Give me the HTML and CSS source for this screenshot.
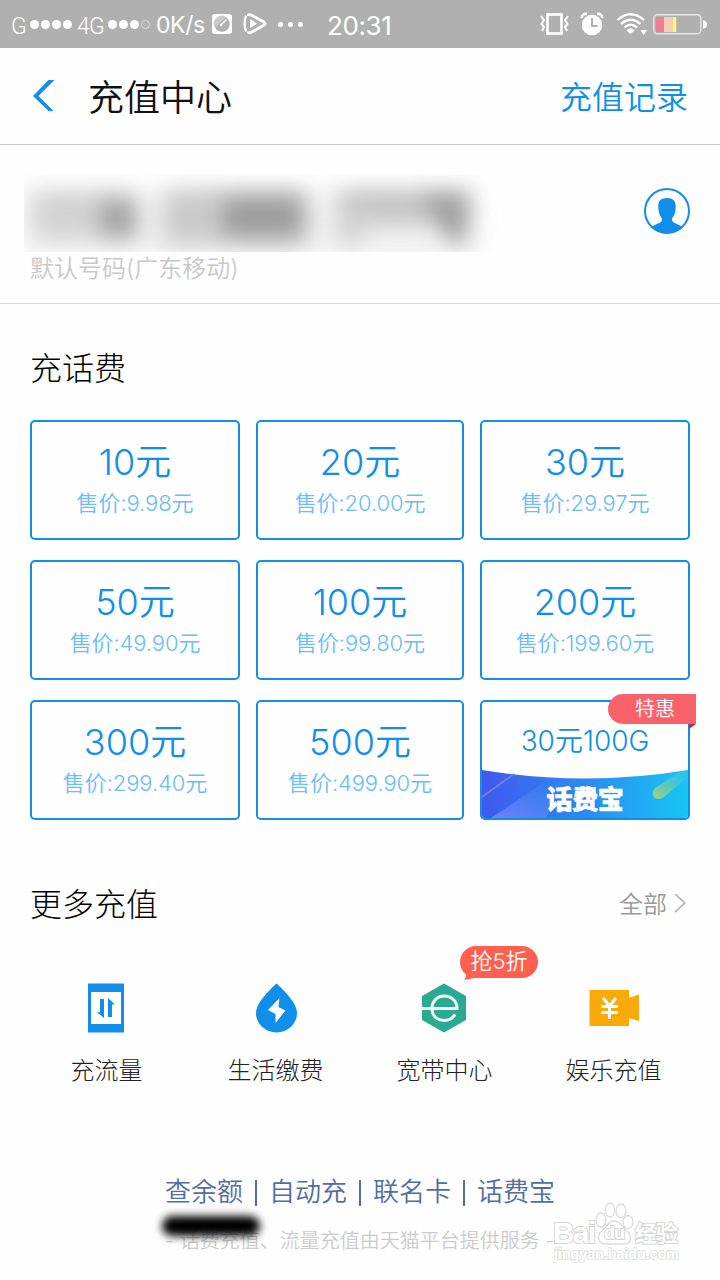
FILE: index.html
```html
<!DOCTYPE html>
<html lang="zh-CN">
<head>
<meta charset="utf-8">
<title>充值中心</title>
<link rel="stylesheet" href="styles.css">
</head>
<body>
<div class="screen">
  <div class="status">
    <span class="carrier carrier-g">G</span>
    <span class="signal"><i></i><i></i><i></i><i></i></span>
    <span class="carrier carrier-4g">4G</span>
    <span class="signal"><i></i><i></i><i></i><i class="off"></i></span>
    <span class="speed">0K/s</span>
    <svg class="ic-gauge" width="20" height="20" viewBox="0 0 20 20"><rect width="20" height="20" rx="3" fill="#fff"/><circle cx="10" cy="10" r="7.8" fill="#b0b0b0"/><path d="M3 14A8 8 0 0 1 14 3Z" fill="#cacaca"/><path d="M8.5 11.5L14.5 5.5" stroke="#fff" stroke-width="1.3"/><circle cx="9" cy="11" r="1.2" fill="#fff"/></svg>
    <svg class="ic-play" width="24" height="22" viewBox="0 0 24 22"><path d="M3 2.5Q.2 11 3 18.5" fill="none" stroke="#fff" stroke-width="2.2"/><path d="M5 3Q5.500 .8 8 2L21 9Q23 10.500 21 12L8 19.500Q5.500 20.500 5 18.500" fill="none" stroke="#fff" stroke-width="2.8"/><path d="M7 6L14 10.500L7 15Z" fill="#fff"/></svg>
    <span class="more"><i></i><i></i><i></i></span>
    <span class="time">20:31</span>
    <div class="status-right">
      <svg width="29" height="24" viewBox="0 0 29 24"><rect x="7.500" y="2.500" width="14" height="19" fill="none" stroke="#fff" stroke-width="2.600"/><path d="M1 4L4 8L1.500 12L4 15L2 19M28 4L25 8L27.500 12L25 15L27 19" fill="none" stroke="#fff" stroke-width="2"/></svg>
      <svg class="ic-alarm" width="24" height="24" viewBox="0 0 24 24"><circle cx="12" cy="13" r="10.300" fill="#fff"/><path d="M1.500 6Q2.500 1.500 7 1.800M17 1.800Q21.500 1.500 22.500 6" fill="none" stroke="#fff" stroke-width="2.500"/><path d="M12 6V14H17.500" fill="none" stroke="#b0b0b0" stroke-width="2"/></svg>
      <svg class="ic-wifi" width="31" height="24" viewBox="0 0 31 24"><path d="M1.500 8Q14.500 -3.500 28 8M5 12Q14.500 3.500 24.500 12M8.500 15.500Q14.500 10 21 15.500" fill="none" stroke="#fff" stroke-width="2.300"/><path d="M10.500 18.500Q14.500 14 18.500 18.500L14.500 22Z" fill="#fff"/><path d="M24.500 18H31L27.700 23Z" fill="#fff"/></svg>
      <svg class="ic-battery" width="55" height="22" viewBox="0 0 55 22"><rect x=".8" y="1.800" width="47" height="19" rx="3.500" fill="none" stroke="#e6e6e6" stroke-width="1.400"/><path d="M3 4H11V19H3Z" fill="#eb8190"/><path d="M11 4H19.500V19H11Z" fill="#f9ccb5"/><path d="M19.500 4H23.300V19H19.500Z" fill="#fbf67d"/><path d="M50 7Q54 8 54 11.500Q54 15 50 16Z" fill="#fff"/></svg>
    </div>
  </div>

  <header class="header">
    <svg class="back" width="24" height="32" viewBox="0 0 24 32"><path d="M16.500 0H22.500L6.500 16L21.500 31H16.500L1 16Z" fill="#108ee9"/></svg>
    <h1 class="title">充值中心</h1>
    <span class="history">充值记录</span>
  </header>

  <section class="account">
    <div class="account-main">
      <svg class="hidden-number" width="476" height="78" viewBox="0 0 476 78">
        <defs><filter id="soft" x="-20%" y="-60%" width="140%" height="220%"><feGaussianBlur stdDeviation="11"/></filter></defs>
        <rect x="-2" y="18" width="456" height="62" fill="#e4e4e4" opacity=".55" filter="url(#soft)"/>
        <g filter="url(#soft)">
          <rect x="10" y="18" width="100" height="46" fill="#d2d2d2"/><rect x="76" y="26" width="36" height="38" fill="#a2a2a2"/>
          <rect x="140" y="16" width="142" height="54" fill="#cacaca"/><rect x="198" y="22" width="82" height="42" fill="#9d9d9d"/>
          <rect x="314" y="16" width="132" height="34" fill="#c4c4c4"/><rect x="314" y="36" width="26" height="34" fill="#d2d2d2"/><path d="M396 20H442V68H426Z" fill="#9c9c9c"/>
        </g>
      </svg>
      <p class="operator">默认号码(广东移动)</p>
    </div>
    <svg class="contact" width="46" height="46" viewBox="0 0 46 46"><defs><clipPath id="disc"><circle cx="23" cy="23" r="22"/></clipPath></defs><circle cx="23" cy="23" r="22" fill="#fff" stroke="#108ee9" stroke-width="2"/><path clip-path="url(#disc)" d="M23 10C16.500 10 14 13.500 14.300 19C14.500 25 16 28 18 30.500Q18.500 34 14 35.500L7 39V46H39V39L32 35.500Q27.500 34 28 30.500C30 28 31.500 25 31.700 19C32 13.500 29.500 10 23 10Z" fill="#108ee9"/></svg>
  </section>

  <section class="topup">
    <h2 class="heading">充话费</h2>
    <div class="grid">
      <div class="card"><b class="amount">10元</b><span class="price">售价:9.98元</span></div>
      <div class="card"><b class="amount">20元</b><span class="price">售价:20.00元</span></div>
      <div class="card"><b class="amount">30元</b><span class="price">售价:29.97元</span></div>
      <div class="card"><b class="amount">50元</b><span class="price">售价:49.90元</span></div>
      <div class="card"><b class="amount">100元</b><span class="price">售价:99.80元</span></div>
      <div class="card"><b class="amount">200元</b><span class="price">售价:199.60元</span></div>
      <div class="card"><b class="amount">300元</b><span class="price">售价:299.40元</span></div>
      <div class="card"><b class="amount">500元</b><span class="price">售价:499.90元</span></div>
      <div class="card promo">
        <b class="promo-amount">30元100G</b>
        <div class="promo-banner">
          <svg class="promo-art" width="206" height="49" viewBox="0 0 206 49"><defs><linearGradient id="sea"><stop offset="0" stop-color="#4058ee"/><stop offset=".5" stop-color="#2b8af0"/><stop offset="1" stop-color="#17c6f4"/></linearGradient><linearGradient id="comet" x1="0" y1="1" x2="1" y2="0"><stop offset="0" stop-color="#a8d66d"/><stop offset="1" stop-color="#3dc7e7" stop-opacity=".3"/></linearGradient><linearGradient id="ray" x1="0" y1="1" x2="1" y2="0"><stop offset="0" stop-color="#7b8dfa" stop-opacity=".8"/><stop offset="1" stop-color="#5695fa" stop-opacity="0"/></linearGradient></defs><path d="M0 1Q103 18 206 1V49H0Z" fill="url(#sea)"/><path d="M9 49L61 14H82L64 49Z" fill="url(#ray)"/><path d="M0 28L32 5" stroke="#7080e2" stroke-width="2"/><path d="M173 19L198 3L206 2V8L182 28C174 34 167 26 173 19Z" fill="url(#comet)"/></svg>
          <span class="promo-name">话费宝</span>
        </div>
        <span class="ribbon">特惠</span>
      </div>
    </div>
  </section>

  <section class="services">
    <div class="services-head">
      <h2 class="heading">更多充值</h2>
      <span class="all">全部<svg width="14" height="22" viewBox="0 0 14 22"><path d="M2 0L12 9L2 18" fill="none" stroke="#bbb" stroke-width="1.800"/></svg></span>
    </div>
    <div class="service-list">
      <div class="service">
        <svg width="50" height="50" viewBox="0 0 50 50"><path d="M6 .5H42V49.500H6Z" fill="#108ee9"/><path d="M9 9H39V41H9Z" fill="#fff"/><path d="M22 16V35L15 29.300H18V16ZM26 34V15L33 21.500H30V34Z" fill="#108ee9"/></svg>
        <span class="service-name">充流量</span>
      </div>
      <div class="service">
        <svg width="50" height="50" viewBox="0 0 50 50"><path d="M25.500 .5C19.500 6 5 19.500 5 30A20.500 19.500 0 0 0 46 30C46 19.500 31.500 6 25.500 .5Z" fill="#108ee9"/><path d="M28.500 15L17 27L24.500 31V40L34.500 27.500L27.500 24Z" fill="#fff"/></svg>
        <span class="service-name">生活缴费</span>
      </div>
      <div class="service">
        <svg width="50" height="50" viewBox="0 0 50 50"><path d="M24 .5L46 13V37L24 49.500L2 37V13Z" fill="#2aaa91"/><path d="M2 25.500H37C37 18 31.500 13 24.500 13C17 13 12 18.500 12 25.500C12 33 17 37.500 24.500 37.500C29 37.500 32.500 35.500 35 31.500" fill="none" stroke="#fff" stroke-width="2.900"/></svg>
        <span class="service-name">宽带中心</span>
        <span class="bubble">抢5折<svg class="bubble-tail" width="16" height="9" viewBox="0 0 16 9"><path d="M1 0Q4 4 0 9L16 6V0Z" fill="#ff6050"/></svg></span>
      </div>
      <div class="service">
        <svg width="50" height="50" viewBox="0 0 50 50"><path d="M.5 7H40V15L50 11.500V38L40 35V43H.5Z" fill="#f9a908"/><path d="M14 15L20.500 23L27 15M20.500 22V36M12.500 23.500H29M12.500 29.500H29" fill="none" stroke="#fff" stroke-width="3"/></svg>
        <span class="service-name">娱乐充值</span>
      </div>
    </div>
  </section>

  <footer class="footer">
    <nav class="links"><span>查余额</span><i></i><span>自动充</span><i></i><span>联名卡</span><i></i><span>话费宝</span></nav>
    <p class="notice">- 话费充值、流量充值由天猫平台提供服务 -</p>
    <div class="smear"></div>
    <svg class="watermark" width="132" height="66" viewBox="0 0 132 66">
      <g fill="#fff" stroke="#dcdcdc" stroke-width="1.300"><ellipse cx="49" cy="19" rx="5" ry="7"/><ellipse cx="58" cy="9" rx="4.800" ry="7"/><ellipse cx="69" cy="10" rx="5" ry="7"/><ellipse cx="76" cy="21" rx="5" ry="6.500"/><path d="M62 20C56 20 55 26 50 30C44 34 46 43 54 43H72C80 43 80 35 75 30C70 26 69 20 62 20Z"/></g>
      <g class="wm-text"><text x="1" y="42" font-size="30" textLength="43">Bai</text><text class="wm-thin" x="52" y="38" font-size="18" textLength="21">du</text><text class="wm-cjk" x="83" y="40" font-size="22" textLength="43">经验</text></g>
      <text class="wm-url" x="2" y="58" font-size="14" textLength="125" lengthAdjust="spacingAndGlyphs">jingyan.baidu.com</text>
    </svg>
  </footer>
</div>
</body>
</html>
```
FILE: styles.css
```css
* { box-sizing: border-box; }
body { margin: 0; background: #fff; font-family: Inter, "Noto Sans CJK SC", sans-serif; font-weight: 300; }
h1, h2, p { margin: 0; font-weight: 300; }
.screen { width: 720px; height: 1280px; overflow: hidden; background: #fefefe; display: flex; flex-direction: column; }

.status { height: 48px; flex: none; background: #b0b0b0; color: #fff; display: flex; align-items: center; padding: 0 12px 0 11px; font-family: Roboto, Inter, sans-serif; }
.status svg { flex: none; display: block; }
.carrier { font-size: 23px; line-height: 28px; padding-top: 6px; font-weight: 350; }
.carrier-g { width: 19px; }
.carrier-4g { width: 31px; margin-left: 5px; white-space: nowrap; letter-spacing: -.8px; }
.signal { display: flex; gap: 2px; }
.signal i { width: 9px; height: 9px; border-radius: 50%; background: #fff; }
.signal .off { background: none; border: 1px solid #ddd; }
.speed { font-family: Inter, sans-serif; font-size: 23px; width: 50px; margin-left: 6px; line-height: 28px; padding-top: 2px; font-weight: 400; white-space: nowrap; letter-spacing: -.4px; }
.ic-gauge { margin-left: 6px; }
.ic-play { margin-left: 11px; }
.more { display: flex; gap: 5px; margin-left: 11px; }
.more i { width: 5px; height: 5px; border-radius: 50%; background: #fff; }
.time { font-family: Inter, sans-serif; font-size: 26px; margin-left: 24px; padding-top: 4px; font-weight: 400; line-height: 30px; letter-spacing: -.4px; }
.status-right { margin-left: auto; display: flex; align-items: center; }
.ic-alarm { margin-left: 11px; }
.ic-wifi { margin-left: 12px; }
.ic-battery { margin-left: 6px; }

.header { height: 97px; flex: none; border-bottom: 1px solid #c8c8c8; display: flex; align-items: center; padding: 0 32px; }
.back { flex: none; }
.title { font-size: 36px; line-height: 48px; color: #111; margin-left: 32px; padding-top: 3px; font-weight: 350; }
.history { margin-left: auto; font-size: 32px; line-height: 48px; color: #108ee9; padding-top: 3px; font-weight: 350; }

.account { height: 159px; flex: none; border-bottom: 1px solid #dcdcdc; display: flex; justify-content: space-between; align-items: flex-start; padding: 29px 30px 0 24px; }
.hidden-number { display: block; }
.operator { color: #c8c8c8; font-size: 24px; line-height: 32px; padding: 1px 0 0 6px; font-weight: 350; }
.contact { margin-top: 14px; flex: none; }

.topup { padding: 41px 30px 0; flex: none; }
.heading { color: #000; font-size: 32px; line-height: 48px; }
.grid { display: grid; grid-template-columns: 210px 208px 210px; gap: 20px 16px; grid-auto-rows: 120px; margin-top: 27px; }
.card { border: 2px solid #108ee9; border-radius: 5px; display: flex; flex-direction: column; align-items: center; padding-top: 18px; position: relative; }
.amount { color: #108ee9; font-size: 36px; line-height: 44px; font-weight: 350; }
.price { color: #6bbcfa; font-size: 22px; line-height: 32px; margin-top: 3px; font-weight: 350; letter-spacing: -.1px; }
.promo { padding-top: 21px; }
.promo-amount { color: #108ee9; font-size: 28px; line-height: 36px; font-weight: 350; }
.promo-banner { margin-top: auto; width: 206px; height: 49px; position: relative; display: flex; justify-content: center; overflow: hidden; border-radius: 0 0 3px 3px; }
.promo-art { position: absolute; inset: 0; }
.promo-name { position: relative; color: #fff; font-size: 26px; line-height: 28px; font-weight: 900; padding-top: 17px; -webkit-text-stroke: .6px #fff; letter-spacing: -.4px; }
.ribbon { position: absolute; right: -8px; top: -8px; width: 88px; height: 30px; border-radius: 15px 0 0 15px; background: #fa626b; color: #fff; font-size: 20px; line-height: 30px; padding-left: 27px; font-weight: 350; }
.ribbon::after { content: ""; position: absolute; right: 0; top: 30px; border-top: 5px solid #d7202f; border-right: 7px solid transparent; }

.services { padding: 61px 22px 0; flex: none; }
.services-head { display: flex; justify-content: space-between; align-items: center; padding: 0 11px 0 8px; }
.all { display: flex; align-items: center; gap: 6px; color: #999; font-size: 24px; line-height: 32px; font-weight: 350; }
.service-list { display: grid; grid-template-columns: repeat(4, 169px); margin-top: 54px; }
.service { display: flex; flex-direction: column; align-items: center; position: relative; }
.service-name { color: #222; font-size: 24px; line-height: 32px; margin-top: 22px; }
.bubble { position: absolute; left: 100px; top: -37px; width: 78px; height: 32px; border-radius: 16px; background: #ff6050; color: #fff; font-size: 22px; line-height: 31px; text-align: center; font-weight: 350; }
.bubble-tail { position: absolute; left: 4px; bottom: -2px; }

.footer { position: relative; padding: 87px 0 0 165px; flex: none; }
.links { display: flex; align-items: center; color: #526d9e; font-size: 26px; line-height: 36px; font-weight: 350; }
.links i { width: 2px; height: 26px; background: #526d9e; margin: 2px 12px 0; }
.links span { white-space: nowrap; }
.notice { color: #ccc; font-size: 20px; line-height: 28px; margin-top: 17px; white-space: nowrap; font-weight: 350; }
.smear { position: absolute; left: 162px; top: 129px; width: 98px; height: 20px; border-radius: 10px; background: #000; filter: blur(4px); }
.watermark { position: absolute; left: 552px; top: 114px; }
.wm-text { fill: #fff; stroke: #d5d5d5; stroke-width: 2px; paint-order: stroke; font-family: "Liberation Sans", sans-serif; font-weight: 700; }
.wm-cjk { font-family: "Noto Sans CJK SC", sans-serif; }
.wm-url { fill: #fff; stroke: #dedede; stroke-width: 1.500px; paint-order: stroke; font-family: "Liberation Sans", sans-serif; font-weight: 700; }
```
